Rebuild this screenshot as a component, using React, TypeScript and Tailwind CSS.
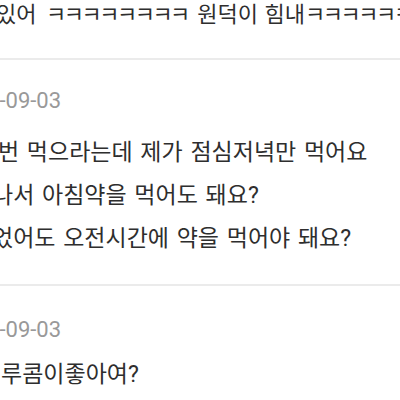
const FONT = "font-['Roboto','Noto_Sans_CJK_KR',sans-serif]";

type Comment = {
  date: string;
  lines: { text: string; shift: string }[];
  top: string;
  gap: string;
  bottom: string;
};

const COMMENTS: Comment[] = [
  {
    date: '2023-09-03',
    lines: [
      { text: '번 먹으라는데 제가 점심저녁만 먹어요', shift: '-ml-[2px]' },
      { text: '나서 아침약을 먹어도 돼요?', shift: '-ml-[8px]' },
      { text: '었어도 오전시간에 약을 먹어야 돼요?', shift: '-ml-[8px]' },
    ],
    top: 'pt-[29px]',
    gap: 'mt-[18px]',
    bottom: 'pb-[24px]',
  },
  {
    date: '2023-09-03',
    lines: [{ text: '루콤이좋아여?', shift: 'ml-[1px]' }],
    top: 'pt-[32px]',
    gap: 'mt-[11px]',
    bottom: 'pb-[30px]',
  },
];

function CommentBlock({ c }: { c: Comment }) {
  return (
    <div className={`border-t-2 border-[#ebebeb] ${c.top} ${c.bottom}`}>
      <p className="-ml-[50px] whitespace-nowrap text-[22px] leading-[24px] text-[#999]">
        {c.date}
      </p>
      <div className={c.gap}>
        {c.lines.map((l) => (
          <p
            key={l.text}
            className={`${l.shift} whitespace-nowrap text-[23px] leading-[43px] [word-spacing:2px] text-[#2e2e2e]`}
          >
            {l.text}
          </p>
        ))}
      </div>
    </div>
  );
}

export default function App() {
  return (
    <div className={`w-[400px] h-[400px] overflow-hidden bg-white ${FONT}`}>
      <div className="-mt-[7px] pb-[22px]">
        <p className="-ml-[4px] whitespace-nowrap text-[22px] leading-[43px] [word-spacing:4px] text-[#2e2e2e]">
          있어 <span className="tracking-[-2.5px]">ㅋㅋㅋㅋㅋㅋㅋㅋ</span> 원덕이{' '}
          <span className="-ml-[3px]">힘내</span>
          <span className="tracking-[-2.5px]">ㅋㅋㅋㅋㅋㅋㅋ</span>
        </p>
      </div>
      {COMMENTS.map((c, i) => (
        <CommentBlock key={i} c={c} />
      ))}
    </div>
  );
}
